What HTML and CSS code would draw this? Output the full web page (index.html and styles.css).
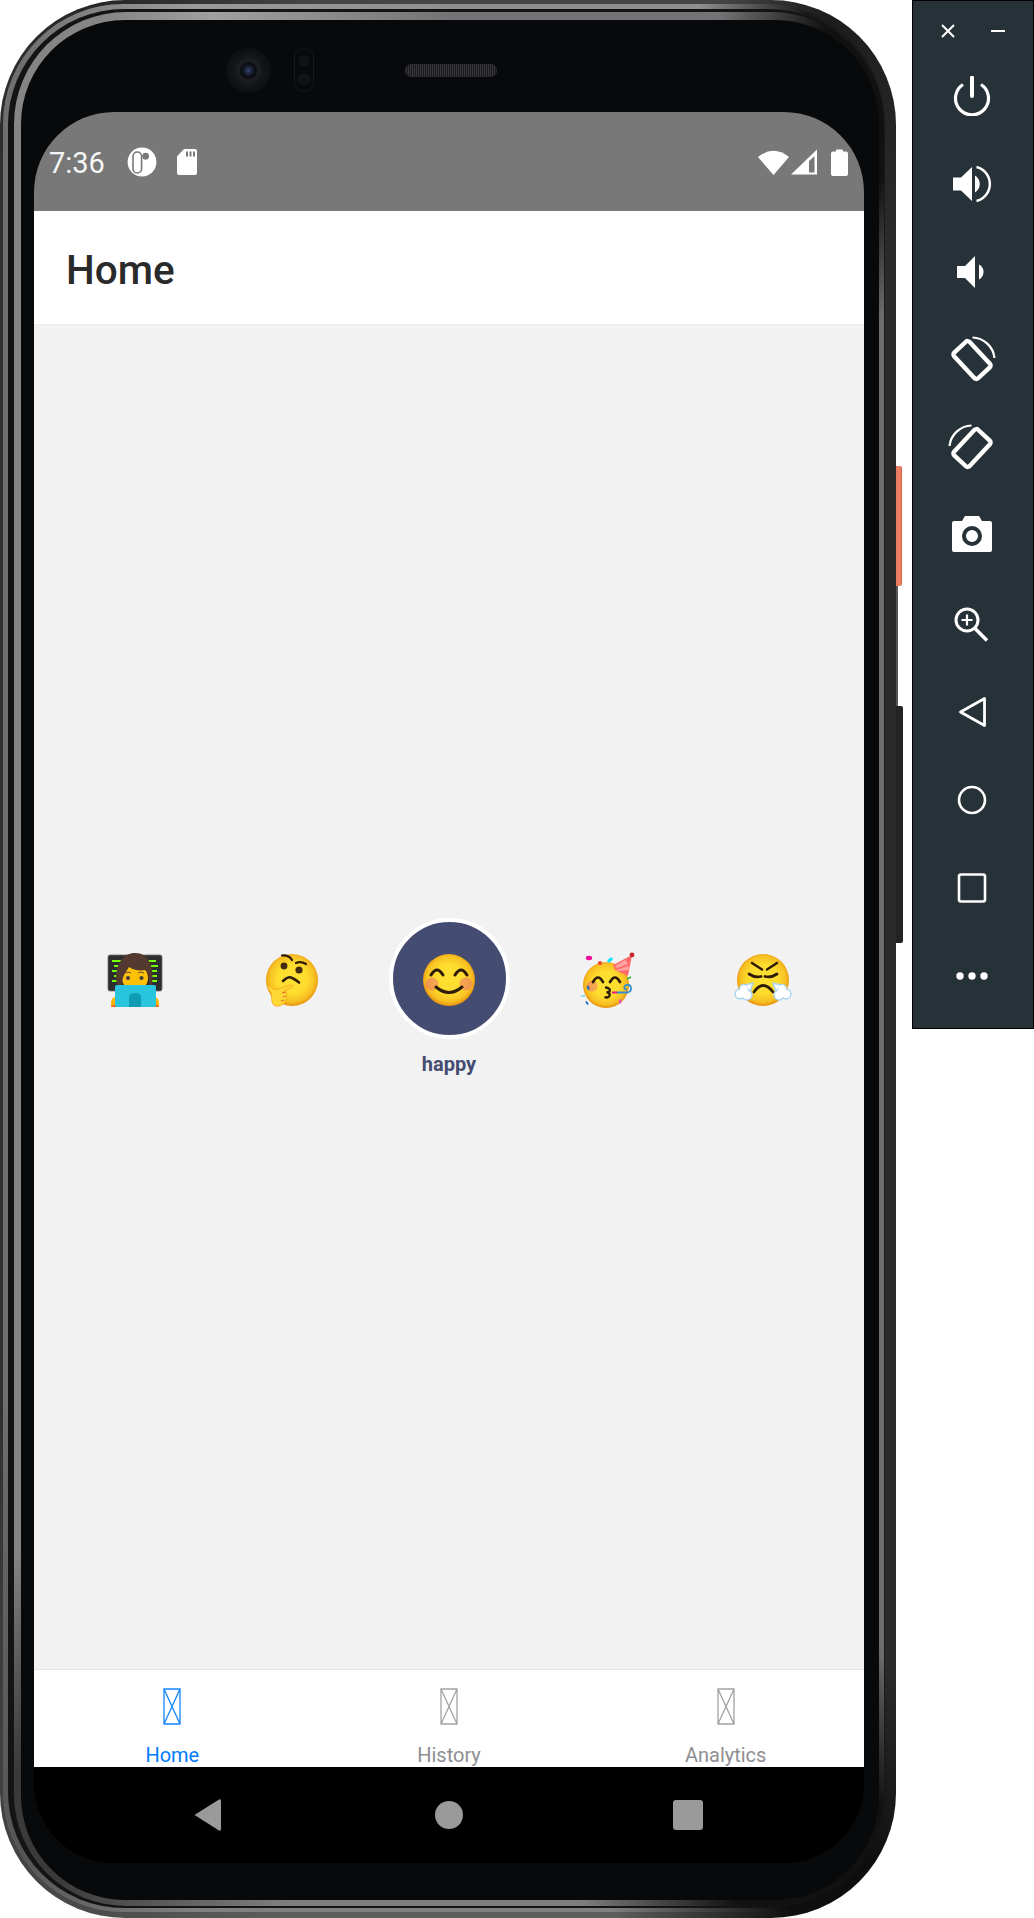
FILE: index.html
```html
<!DOCTYPE html>
<html lang="en">
<head>
  <meta charset="UTF-8" />
  <meta name="viewport" content="width=device-width, initial-scale=1.0" />
  <title>Home</title>
  <link rel="stylesheet" href="styles.css">
</head>
<body>
  <svg class="svg-defs" aria-hidden="true">
    <defs>
      <radialGradient id="faceFill" cx="50%" cy="48%" r="52%">
        <stop offset="0%" stop-color="#fee133" />
        <stop offset="55%" stop-color="#fedc2e" />
        <stop offset="85%" stop-color="#f6bf22" />
        <stop offset="100%" stop-color="#e8900c" />
      </radialGradient>
    </defs>
  </svg>

  <div class="desktop">
    <div class="phone">
      <div class="side-button side-power"></div>
      <div class="side-edge"></div>
      <div class="side-button side-volume"></div>

      <div class="phone-trim">
        <div class="phone-gap">
          <div class="phone-rim">
            <div class="bezel">
              <div class="bezel-top">
                <div class="camera"></div>
                <div class="sensor"><span></span><span></span></div>
                <div class="speaker"></div>
              </div>

              <div class="screen">
                <div class="status-bar">
                  <div class="status-left">
                    <span class="clock">7:36</span>
                    <svg class="status-app" width="30" height="30" viewBox="0 0 30 30">
                      <circle cx="15" cy="15" r="14.4" fill="#fff" />
                      <rect x="6" y="5" width="8.6" height="21" rx="4.3" fill="#fff" stroke="#787878" stroke-width="1.6" />
                      <circle cx="18.6" cy="9.2" r="3.4" fill="#787878" />
                    </svg>
                    <svg class="status-sd" width="20" height="26" viewBox="0 0 20 26">
                      <path d="M7 0H18a2 2 0 0 1 2 2V24a2 2 0 0 1-2 2H2a2 2 0 0 1-2-2V7.5Z" fill="#fff" />
                      <path d="M9 2.500h2v5H9zM12.500 2.500h2v5h-2zM16 2.500h2v5h-2z" fill="#787878" />
                    </svg>
                  </div>
                  <div class="status-right">
                    <svg width="31" height="26" viewBox="0 0 31 26">
                      <path d="M0 8Q15.500-4.500 31 8L15.500 26Z" fill="#fff" />
                    </svg>
                    <svg width="26" height="26" viewBox="0 0 26 26">
                      <path d="M0 25.500 26 .5V25.500Z" fill="#fff" />
                      <path d="M18 23.500H23.500V7L18 12.200Z" fill="#787878" />
                    </svg>
                    <svg class="status-battery" width="17" height="27" viewBox="0 0 17 27">
                      <path d="M5 2.500V1.500a1 1 0 0 1 1-1H11a1 1 0 0 1 1 1V2.500H15a2 2 0 0 1 2 2V25a2 2 0 0 1-2 2H2a2 2 0 0 1-2-2V4.500a2 2 0 0 1 2-2Z" fill="#fff" />
                    </svg>
                  </div>
                </div>

                <header class="app-header">Home</header>

                <main class="mood-area">
                  <div class="mood-row">
                    <div class="mood">
                      <div class="mood-icon">
                        <svg class="emoji" width="54" height="54" viewBox="0 0 54 54">
                          <rect x="0" y="4" width="54" height="36" rx="2" fill="#2e2e2e" stroke="#6d6d6d" stroke-width=".8" />
                          <path d="M4 10h9M40 10h8M6 15h6M42 15h8M4 20h7M43 20h6M6 25h6M42 25h7M4 30h8M41 30h8" stroke="#76ff03" stroke-width="1.800" />
                          <path d="M4 56c-2-4-1-9 3-10l5 2v8zM50 56c2-4 1-9-3-10l-5 2v8z" fill="#ffb300" />
                          <path d="M3 56h6v-2H3.500zM45 56h6l-.5-2H45z" fill="#f4681f" />
                          <ellipse cx="27" cy="27" rx="13" ry="13" fill="#ffc107" />
                          <path d="M9 34C6 16 13 3 26 2c13-1 21 11 18 32h-3c0-8-1-12-3-15-7 1-13 0-17-3-3 5-7 9-7 18Z" fill="#543930" />
                          <circle cx="20" cy="27" r="2.100" fill="#404040" />
                          <circle cx="33.500" cy="27" r="2.100" fill="#404040" />
                          <path d="M17 22q3-2 6 0M30 22q3-2 6 0" stroke="#6d4c41" stroke-width="1" fill="none" />
                          <rect x="7" y="34" width="41" height="22" rx="2" fill="#29c5de" />
                          <path d="M21 56V46q0-4 6-4t6 4v10Z" fill="#0f9db3" />
                        </svg>
                      </div>
                    </div>

                    <div class="mood">
                      <div class="mood-icon">
                        <svg class="emoji" width="54" height="54" viewBox="0 0 54 54">
                          <circle cx="27" cy="29" r="26" fill="url(#faceFill)" />
                          <circle cx="19" cy="15" r="3.400" fill="#422b0d" />
                          <circle cx="34" cy="19" r="3.600" fill="#422b0d" />
                          <path d="M17 4.500q7-.5 10 4.500M31 12q5-2 10 1" stroke="#2e1c06" stroke-width="2.200" fill="none" stroke-linecap="round" />
                          <path d="M18 30q5-4.500 8-3.500t8 5" stroke="#2e1c06" stroke-width="2.600" fill="none" stroke-linecap="round" />
                          <path d="M3 35c1-1 3 0 4 2 2 2 5 2 9 0l9-3c2-.5 4 .5 2 2l-8 4c2 1 3 3 3 5 0 3-1 6-4 8-3 3-8 3-10 0-2-3-1-7-2-11-1-3-4-5-3-7Z" fill="#fdd835" stroke="#f4a21a" stroke-width=".8" />
                          <path d="M17 42l4-1M18 46l3-1M16 50l3-1" stroke="#e9652b" stroke-width="1" />
                        </svg>
                      </div>
                    </div>

                    <div class="mood mood-selected">
                      <div class="mood-icon">
                        <svg class="emoji" width="54" height="54" viewBox="0 0 54 54">
                          <circle cx="27" cy="29" r="26" fill="url(#faceFill)" />
                          <circle cx="10" cy="33" r="6.500" fill="#ed7770" opacity=".55" />
                          <circle cx="44" cy="33" r="6.500" fill="#ed7770" opacity=".55" />
                          <path d="M9 24q6-10 12 0M33 24q6-10 12 0" stroke="#2e1c06" stroke-width="3" fill="none" stroke-linecap="round" />
                          <path d="M14 36q13 11 26 0" stroke="#2e1c06" stroke-width="3" fill="none" stroke-linecap="round" />
                        </svg>
                      </div>
                      <div class="mood-label">happy</div>
                    </div>

                    <div class="mood">
                      <div class="mood-icon">
                        <svg class="emoji" width="54" height="54" viewBox="0 0 54 54">
                          <circle cx="27" cy="34" r="23" fill="url(#faceFill)" />
                          <path d="M53 4 34 14l2 5 13 6Z" fill="#ff6b6b" />
                          <path d="M46 9l3 4-11 4-2-2ZM50 15l-.5 4L38 20l-1-1Z" fill="#ffa3a3" />
                          <circle cx="53" cy="4" r="2.400" fill="#c62828" />
                          <circle cx="13" cy="35" r="5.500" fill="#ed7770" opacity=".55" />
                          <path d="M14 31q5-9 10 0M31 31q5-9 10 0" stroke="#2e1c06" stroke-width="2.700" fill="none" stroke-linecap="round" />
                          <path d="M27 36.500q5 1 3.500 4-1 1-3 .7 4 .5 3 3.300-1 2.500-4 1.800" stroke="#2e1c06" stroke-width="2.400" fill="none" stroke-linecap="round" />
                          <path d="M33 41.500h5" stroke="#e6178c" stroke-width="2" />
                          <path d="M38 41.500h10q4.500-.5 4-4.500-.5-3.500-4-3.200-3 .4-2.600 3 .5 2 2.400 1.600" stroke="#2f8fd0" stroke-width="1.800" fill="none" />
                          <ellipse cx="10" cy="7" rx="3.200" ry="2.200" fill="#f0109c" />
                          <circle cx="21" cy="12" r="2.100" fill="#f44336" />
                          <ellipse cx="31" cy="9" rx="3.200" ry="1.600" fill="#00e5ff" transform="rotate(-40 31 9)" />
                          <path d="M48 28l4-2" stroke="#2eb82e" stroke-width="1.500" />
                          <path d="M8.500 35l1.500 3.500" stroke="#1565c0" stroke-width="2" />
                          <path d="M2 45h4" stroke="#81d4fa" stroke-width="1.600" />
                          <path d="M7 50.500l2 3" stroke="#1565c0" stroke-width="1.700" />
                          <path d="M41.500 48.500l-.5 4" stroke="#ec40d0" stroke-width="2" />
                        </svg>
                      </div>
                    </div>

                    <div class="mood">
                      <div class="mood-icon">
                        <svg class="emoji" width="54" height="54" viewBox="0 0 54 54">
                          <circle cx="27" cy="29" r="26" fill="url(#faceFill)" />
                          <path d="M16 12l10 6.500M41 12l-10 6.500" stroke="#2e1c06" stroke-width="2.400" fill="none" stroke-linecap="round" />
                          <path d="M13 23q6 4 12 2.500M41 23q-6 4-12 2.500" stroke="#2e1c06" stroke-width="2.800" fill="none" stroke-linecap="round" />
                          <path d="M18 41q9-13 19 0" stroke="#2e1c06" stroke-width="2.800" fill="none" stroke-linecap="round" />
                          <g fill="#fff" stroke="#a8d5ee" stroke-width="1.500">
                            <circle cx="4" cy="43" r="4.800" />
                            <circle cx="11" cy="44" r="5" />
                            <circle cx="8" cy="38" r="4.500" />
                            <path d="M9 34 17 32 14 41Z" />
                            <circle cx="50" cy="43" r="4.800" />
                            <circle cx="43" cy="44" r="5" />
                            <circle cx="46" cy="38" r="4.500" />
                            <path d="M45 34 37 32 40 41Z" />
                          </g>
                          <g fill="#fff">
                            <circle cx="4" cy="43" r="4" />
                            <circle cx="11" cy="44" r="4.200" />
                            <circle cx="8" cy="38" r="3.800" />
                            <circle cx="50" cy="43" r="4" />
                            <circle cx="43" cy="44" r="4.200" />
                            <circle cx="46" cy="38" r="3.800" />
                          </g>
                        </svg>
                      </div>
                    </div>
                  </div>
                </main>

                <nav class="tab-bar">
                  <div class="tab tab-active">
                    <svg class="tab-icon" width="18" height="37" viewBox="0 0 18 37">
                      <path d="M1 1H17V36H1ZM1 1 17 36M17 1 1 36" fill="none" stroke="currentColor" stroke-width="1.300" />
                    </svg>
                    <span class="tab-label">Home</span>
                  </div>
                  <div class="tab">
                    <svg class="tab-icon" width="18" height="37" viewBox="0 0 18 37">
                      <path d="M1 1H17V36H1ZM1 1 17 36M17 1 1 36" fill="none" stroke="currentColor" stroke-width="1.300" />
                    </svg>
                    <span class="tab-label">History</span>
                  </div>
                  <div class="tab">
                    <svg class="tab-icon" width="18" height="37" viewBox="0 0 18 37">
                      <path d="M1 1H17V36H1ZM1 1 17 36M17 1 1 36" fill="none" stroke="currentColor" stroke-width="1.300" />
                    </svg>
                    <span class="tab-label">Analytics</span>
                  </div>
                </nav>

                <div class="nav-bar">
                  <svg width="28" height="34" viewBox="0 0 28 34">
                    <path d="M1.500 17 26 1.500Q28 .5 28 3V31Q28 33.500 26 32.500Z" fill="#9a9a9a" />
                  </svg>
                  <div class="nav-home"></div>
                  <div class="nav-recent"></div>
                </div>
              </div>
            </div>
          </div>
        </div>
      </div>
    </div>

    <aside class="tool-panel">
      <div class="tool-header">
        <svg width="14" height="14" viewBox="0 0 14 14">
          <path d="M1 1 13 13M13 1 1 13" stroke="#fff" stroke-width="2" />
        </svg>
        <svg width="14" height="14" viewBox="0 0 14 14">
          <path d="M0 7H14" stroke="#fff" stroke-width="2" />
        </svg>
      </div>

      <div class="tool-button">
        <svg width="40" height="40" viewBox="0 0 40 40">
          <path d="M11 8.500A16.500 16.500 0 1 0 29 8.500" fill="none" stroke="#fff" stroke-width="3.200" />
          <path d="M20 1.500V20" stroke="#fff" stroke-width="4" stroke-linecap="round" />
        </svg>
      </div>
      <div class="tool-button">
        <svg width="40" height="40" viewBox="0 0 40 40">
          <path d="M1 13.500H9L20 3V37L9 26.500H1Z" fill="#fff" />
          <path d="M23 11.500A10 10 0 0 1 23 28.500Z" fill="#fff" />
          <path d="M24.500 3A17.500 17.500 0 0 1 24.500 37" fill="none" stroke="#fff" stroke-width="2.500" />
        </svg>
      </div>
      <div class="tool-button">
        <svg width="40" height="40" viewBox="0 0 40 40">
          <path d="M5 14H13L23 4V36L13 26H5Z" fill="#fff" />
          <path d="M27 12.500A8.500 8.500 0 0 1 27 27.500Z" fill="#fff" />
        </svg>
      </div>
      <div class="tool-button">
        <svg class="rotate-icon" width="48" height="48" viewBox="0 0 48 48">
          <rect x="13.500" y="6.500" width="21" height="35" rx="2.500" fill="none" stroke="#fff" stroke-width="4.400" transform="rotate(-43 24 24)" />
          <path d="M24.500 1.500A23 23 0 0 1 46.500 22" fill="none" stroke="#fff" stroke-width="2.200" />
        </svg>
      </div>
      <div class="tool-button">
        <svg class="rotate-icon rotate-left" width="48" height="48" viewBox="0 0 48 48">
          <rect x="13.500" y="6.500" width="21" height="35" rx="2.500" fill="none" stroke="#fff" stroke-width="4.400" transform="rotate(-43 24 24)" />
          <path d="M24.500 1.500A23 23 0 0 1 46.500 22" fill="none" stroke="#fff" stroke-width="2.200" />
        </svg>
      </div>
      <div class="tool-button">
        <svg width="40" height="40" viewBox="0 0 40 40">
          <path d="M10 5 13 0H27L30 5H38a2 2 0 0 1 2 2V34a2 2 0 0 1-2 2H2a2 2 0 0 1-2-2V7a2 2 0 0 1 2-2Z" fill="#fff" />
          <circle cx="20" cy="20" r="8" fill="none" stroke="#263238" stroke-width="4" />
        </svg>
      </div>
      <div class="tool-button">
        <svg width="40" height="40" viewBox="0 0 40 40">
          <circle cx="15" cy="16" r="11" fill="none" stroke="#fff" stroke-width="3" />
          <path d="M23 24.500 35 36.500" stroke="#fff" stroke-width="3.600" />
          <path d="M15 10.500V21.500M9.500 16H20.500" stroke="#fff" stroke-width="2.200" />
        </svg>
      </div>
      <div class="tool-button">
        <svg width="40" height="40" viewBox="0 0 40 40">
          <path d="M8.500 20 32.500 6.500V33.500Z" fill="none" stroke="#fff" stroke-width="2.800" stroke-linejoin="round" />
        </svg>
      </div>
      <div class="tool-button">
        <svg width="40" height="40" viewBox="0 0 40 40">
          <circle cx="20" cy="20" r="13" fill="none" stroke="#fff" stroke-width="2.600" />
        </svg>
      </div>
      <div class="tool-button">
        <svg width="40" height="40" viewBox="0 0 40 40">
          <rect x="7" y="6.500" width="26" height="27" rx="2" fill="none" stroke="#fff" stroke-width="2.600" />
        </svg>
      </div>
      <div class="tool-button">
        <svg width="40" height="40" viewBox="0 0 40 40">
          <circle cx="8" cy="20" r="3.700" fill="#fff" />
          <circle cx="20" cy="20" r="3.700" fill="#fff" />
          <circle cx="32" cy="20" r="3.700" fill="#fff" />
        </svg>
      </div>
    </aside>
  </div>
</body>
</html>
```

FILE: styles.css
```css
* {
  box-sizing: border-box;
}
html, body {
  margin: 0;
  padding: 0;
  background: #fff;
}
body {
  font-family: Roboto, "Liberation Sans", sans-serif;
  overflow: hidden;
}
.svg-defs {
  position: absolute;
  width: 0;
  height: 0;
}
.desktop {
  display: flex;
  justify-content: space-between;
  align-items: flex-start;
  width: 1034px;
  height: 1918px;
}

/* phone frame, rings from the outside in. the conic stops darken the right hand corners */
.phone {
  position: relative;
  width: 896px;
  height: 1918px;
  padding: 4px 11px 6px 3px;
  border-radius: 125px;
  background: conic-gradient(#454547 0, #454547 16deg, #1c1c1c 22deg, #2b2b2b 32deg, #2b2b2b 148deg, #0e0e0e 155deg, #0e0e0e 160deg, #5c5c5c 170deg, #5c5c5c 190deg, #444 205deg, #303030 225deg, #303030 330deg, #262626 340deg, #454547 352deg);
}
.phone-trim {
  height: 100%;
  padding: 5px 1px 4px 5px;
  border-radius: 120px;
  background: conic-gradient(#8f8f8f 0, #8f8f8f 15deg, #1a1a1a 21deg, #1a1a1a 150deg, #0c0c0c 160deg, #808080 170deg, #808080 195deg, #555 205deg, #6f6f6f 225deg, #6f6f6f 335deg, #9a9a9a 345deg, #8f8f8f 360deg);
}
.phone-gap {
  height: 100%;
  padding: 3px 0 2px 6px;
  border-radius: 116px;
  background: #141414;
}
.phone-rim {
  height: 100%;
  padding: 8px 5px 6px 7px;
  border-radius: 112px;
  background: conic-gradient(#747476 0, #747476 16deg, #111 22deg, #111 29deg, #6e6e6e 34deg, #6e6e6e 148deg, #111 153deg, #111 163deg, #7e7e7e 172deg, #7e7e7e 190deg, #3a3a3a 203deg, #3a3a3a 208deg, #858585 216deg, #858585 340deg, #a0a0a0 346deg, #747476 360deg);
}
.bezel {
  display: flex;
  flex-direction: column;
  height: 100%;
  padding: 0 15px 37px 13px;
  background: #08090b;
  border-radius: 104px;
}
.bezel-top {
  display: flex;
  align-items: center;
  height: 92px;
  padding: 8px 0 0 192px;
}
.camera {
  width: 45px;
  height: 45px;
  border-radius: 50%;
  background: radial-gradient(circle at 50% 50%, #3c4a72 0, #1e2740 3px, #0b0c10 7px, #1e1f23 10px, #151619 14px, #0e0f12 22px);
}
.sensor {
  display: flex;
  flex-direction: column;
  justify-content: space-around;
  align-items: center;
  width: 20px;
  height: 44px;
  margin-left: 23px;
  padding: 3px 0;
  border: 1px solid #17181b;
  border-radius: 10px;
}
.sensor span {
  width: 12px;
  height: 12px;
  border-radius: 50%;
  background: #111215;
}
.speaker {
  width: 92px;
  height: 13px;
  margin-left: 91px;
  border: 1px solid #2a2a2c;
  border-radius: 6px;
  background: repeating-linear-gradient(90deg, #38383a 0, #38383a 1px, #1a1a1c 1px, #1a1a1c 2px);
}

.side-button {
  position: absolute;
  right: -6px;
  width: 6px;
  border-radius: 0 2px 2px 0;
}
.side-power {
  top: 466px;
  height: 120px;
  background: linear-gradient(90deg, #e8785c, #ee8468 70%, #c95c44);
}
.side-volume {
  top: 706px;
  right: -7px;
  width: 7px;
  height: 237px;
  background: #232323;
}
.side-edge {
  position: absolute;
  top: 586px;
  right: -2px;
  width: 2px;
  height: 120px;
  background: #555;
}

/* device screen */
.screen {
  flex: 1;
  display: flex;
  flex-direction: column;
  width: 830px;
  overflow: hidden;
  border-radius: 80px;
  background: #000;
}
.status-bar {
  display: flex;
  justify-content: space-between;
  align-items: center;
  height: 99px;
  padding: 1px 16px 0 15px;
  background: #787878;
  color: #fff;
}
.status-left, .status-right {
  display: flex;
  align-items: center;
}
.clock {
  width: 56px;
  padding-top: 1px;
  font-size: 29px;
  line-height: 32px;
  color: #f6f6f6;
}
.status-app {
  margin-left: 22px;
}
.status-sd {
  margin-left: 20px;
}
.status-right svg + svg {
  margin-left: 2px;
}
.status-right .status-battery {
  margin-left: 14px;
}
.app-header {
  height: 114px;
  padding: 0 32px;
  border-bottom: 1px solid #ececec;
  background: #fff;
  color: #2a2a2a;
  font-size: 40.5px;
  font-weight: 500;
  line-height: 118px;
}
.mood-area {
  flex: 1;
  display: flex;
  align-items: center;
  justify-content: center;
  background: #f2f2f2;
}
.mood-row {
  display: grid;
  grid-template-columns: repeat(5, 157px);
  align-items: start;
  height: 159px;
}
.mood {
  display: flex;
  flex-direction: column;
  align-items: center;
}
.mood-icon {
  display: flex;
  align-items: center;
  justify-content: center;
  width: 121px;
  height: 121px;
  border-radius: 50%;
}
.emoji {
  display: block;
  overflow: visible;
}
.mood-selected .mood-icon {
  border: 4px solid #fff;
  background: #444c72;
}
.mood-label {
  margin-top: 13px;
  color: #444c72;
  font-size: 20px;
  font-weight: 700;
  line-height: 24px;
}
.tab-bar {
  display: grid;
  grid-template-columns: repeat(3, 1fr);
  height: 98px;
  overflow: hidden;
  border-top: 1px solid #e6e6e6;
  background: #fff;
}
.tab {
  display: flex;
  flex-direction: column;
  align-items: center;
  padding-top: 18px;
  color: #a3a3a3;
}
.tab-active {
  color: #1487fb;
}
.tab-icon {
  display: block;
}
.tab-label {
  margin-top: 18px;
  color: #8e8e93;
  font-size: 20px;
  line-height: 24px;
}
.tab-active .tab-label {
  color: #007aff;
}
.nav-bar {
  display: flex;
  align-items: center;
  height: 96px;
  padding: 0 0 0 159px;
  background: #000;
}
.nav-home {
  width: 28px;
  height: 28px;
  margin-left: 214px;
  border-radius: 50%;
  background: #9a9a9a;
}
.nav-recent {
  width: 30px;
  height: 30px;
  margin-left: 210px;
  border-radius: 3px;
  background: #9a9a9a;
}

/* emulator side toolbar */
.tool-panel {
  width: 122px;
  height: 1029px;
  padding-right: 2px;
  border: 1px solid #000;
  background: #263238;
}
.tool-header {
  display: flex;
  align-items: center;
  gap: 36px;
  height: 51px;
  padding: 8px 0 0 28px;
}
.tool-button {
  display: flex;
  align-items: center;
  justify-content: center;
  height: 88px;
}
.rotate-icon {
  display: block;
  overflow: visible;
}
.rotate-left {
  transform: scaleX(-1);
}
```
